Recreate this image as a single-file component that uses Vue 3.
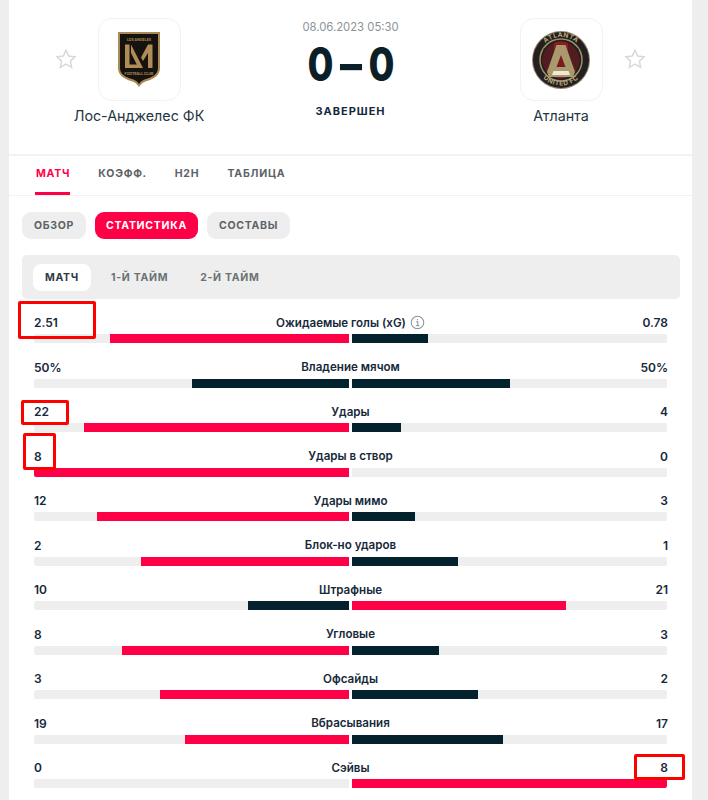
<template>
  <div class="page">
    <div class="card">
      <div class="match-head">
        <svg class="star star-left" viewBox="0 0 24 24"><path d="M12 3.200l2.700 5.800 6.300.8-4.600 4.300 1.200 6.200L12 17.200l-5.600 3.100 1.200-6.200L3 9.800l6.300-.8z" /></svg>
        <div class="team team-left">
          <div class="logo">
            <svg width="44" height="57" viewBox="0 0 44 57">
              <path d="M1 1h42v36c0 7-6 11-13 13-4 1-6 3-8 6-2-3-4-5-8-6C7 48 1 44 1 37z" fill="#a98a55" />
              <path d="M3 3h38v34c0 6-5 9-12 11-3 1-5 2-7 5-2-3-4-4-7-5-7-2-12-5-12-11z" fill="#16120f" />
              <text x="22" y="10" class="lafc-text">LOS ANGELES</text>
              <path d="M8 13.500h4.500v20h9v3.500H8z" fill="#b08d57" />
              <path d="M14 13.500l12 23.500h-4.500l-3-6-4.500-9z" fill="#b08d57" />
              <path d="M31 13.500h4.500V37H31V22l-5 8-2-3.500z" fill="#b08d57" />
              <text x="22" y="44" class="lafc-text">FOOTBALL CLUB</text>
            </svg>
          </div>
          <div class="team-name">Лос-Анджелес ФК</div>
        </div>
        <div class="center">
          <div class="date">08.06.2023 05:30</div>
          <div class="score"><span>0</span><span class="dash">-</span><span>0</span></div>
          <div class="status">ЗАВЕРШЕН</div>
        </div>
        <div class="team team-right">
          <div class="logo">
            <svg width="58" height="58" viewBox="0 0 58 58">
              <circle cx="29" cy="29" r="29" fill="#8f8567" />
              <circle cx="29" cy="29" r="28" fill="#231f20" />
              <circle cx="29" cy="29" r="21" fill="none" stroke="#a19060" stroke-width="1.500" />
              <circle cx="29" cy="29" r="18.500" fill="#8c1c22" />
              <path d="M11 18l11-8v28l-11 1zM47 18l-11-8v28l11 1z" fill="#231f20" opacity="0.55" />
              <path d="M24.500 14h9L43 41l-2 5H17l-2-5z" fill="#a99a6d" />
              <path d="M29 24l4.500 12h-9z" fill="#7d1a20" />
              <path d="M21.500 40h15l1.500 4H20z" fill="#efe9d8" />
              <path id="atl-top" d="M6 29a23 23 0 0 1 46 0" fill="none" />
              <path id="atl-bottom" d="M3.500 29a25.500 25.500 0 0 0 51 0" fill="none" />
              <text class="atl-text"><textPath href="#atl-top" startOffset="50%" text-anchor="middle">ATLANTA</textPath></text>
              <text class="atl-text"><textPath href="#atl-bottom" startOffset="50%" text-anchor="middle">UNITED FC</textPath></text>
            </svg>
          </div>
          <div class="team-name">Атланта</div>
        </div>
        <svg class="star star-right" viewBox="0 0 24 24"><path d="M12 3.200l2.700 5.800 6.300.8-4.600 4.300 1.200 6.200L12 17.200l-5.600 3.100 1.200-6.200L3 9.800l6.300-.8z" /></svg>
      </div>

      <div class="main-tabs">
        <div v-for="t in mainTabs" :key="t" class="main-tab" :class="{ active: t === 'МАТЧ' }">{{ t }}</div>
      </div>

      <div class="content">
        <div class="pills">
          <div class="pill">ОБЗОР</div>
          <div class="pill active">СТАТИСТИКА</div>
          <div class="pill">СОСТАВЫ</div>
        </div>

        <div class="periods">
          <div class="period active">МАТЧ</div>
          <div class="period">1-Й ТАЙМ</div>
          <div class="period">2-Й ТАЙМ</div>
        </div>

        <div class="stats">
          <div v-for="s in stats" :key="s.name" class="stat">
            <div class="stat-text">
              <span class="val">{{ s.home }}</span>
              <span class="name">
                {{ s.name }}
                <svg v-if="s.info" class="info" viewBox="0 0 16 16">
                  <circle cx="8" cy="8" r="6.700" />
                  <path d="M6.500 7.300H8.300V11.500M6.300 11.500H10M8 4.300v1.400" />
                </svg>
              </span>
              <span class="val">{{ s.away }}</span>
            </div>
            <div class="bars">
              <div class="track left">
                <div class="fill" :class="s.homeColor" :style="{ width: s.homePct + '%' }"></div>
              </div>
              <div class="track">
                <div class="fill" :class="s.awayColor" :style="{ width: s.awayPct + '%' }"></div>
              </div>
            </div>
          </div>
        </div>
      </div>

      <div class="mark mark-1"></div>
      <div class="mark mark-2"></div>
      <div class="mark mark-3"></div>
      <div class="mark mark-4"></div>
    </div>
  </div>
</template>

<script setup>
const mainTabs = ['МАТЧ', 'КОЭФФ.', 'H2H', 'ТАБЛИЦА']

// pct = share of the half-bar that is filled, colour goes to the leader
function row(name, home, away, homePct, awayPct, homeColor, awayColor, info) {
  return { name, home, away, homePct, awayPct, homeColor, awayColor, info }
}

const stats = [
  row('Ожидаемые голы (xG)', '2.51', '0.78', 76, 24, 'red', 'dark', true),
  row('Владение мячом', '50%', '50%', 50, 50, 'dark', 'dark'),
  row('Удары', '22', '4', 84, 15.500, 'red', 'dark'),
  row('Удары в створ', '8', '0', 100, 0, 'red', 'dark'),
  row('Удары мимо', '12', '3', 80, 20, 'red', 'dark'),
  row('Блок-но ударов', '2', '1', 66, 33.500, 'red', 'dark'),
  row('Штрафные', '10', '21', 32, 68, 'dark', 'red'),
  row('Угловые', '8', '3', 72, 27.500, 'red', 'dark'),
  row('Офсайды', '3', '2', 60, 40, 'red', 'dark'),
  row('Вбрасывания', '19', '17', 52, 48, 'red', 'dark'),
  row('Сэйвы', '0', '8', 0, 100, 'dark', 'red')
]
</script>

<style scoped>
.page {
  width: 708px;
  height: 800px;
  overflow: hidden;
  background: #eeeeee;
  font-family: Inter, "Noto Sans", sans-serif;
}
.card {
  position: relative;
  width: 683px;
  height: 800px;
  margin-left: 9px;
  background: #fff;
}
.match-head {
  position: relative;
  display: flex;
  justify-content: center;
  height: 156px;
  border-bottom: 2px solid #f2f2f2;
  box-sizing: border-box;
}
.star {
  position: absolute;
  top: 47px;
  width: 24px;
  height: 24px;
}
.star path {
  fill: none;
  stroke: #d5d9da;
  stroke-width: 1.500;
}
.star-left { left: 45px; }
.star-right { right: 45px; }
.team {
  position: absolute;
  top: 18px;
  display: flex;
  flex-direction: column;
  align-items: center;
  width: 200px;
}
.team-left { left: 30px; }
.team-right { left: 452px; }
.logo {
  display: flex;
  align-items: center;
  justify-content: center;
  width: 83px;
  height: 83px;
  border: 1px solid #f2f2f2;
  border-radius: 14px;
  box-sizing: border-box;
}
.lafc-text {
  font-size: 3.500px;
  font-weight: 700;
  fill: #b08d57;
  text-anchor: middle;
}
.atl-text {
  font-size: 6.500px;
  font-weight: 700;
  fill: #b8a97f;
  letter-spacing: 0.500px;
}
.team-name {
  margin-top: 6px;
  font-size: 14.300px;
  line-height: 18px;
  color: #243642;
}
.center {
  display: flex;
  flex-direction: column;
  align-items: center;
}
.date {
  margin-top: 19px;
  font-size: 11.300px;
  line-height: 16px;
  color: #8c9296;
}
.score {
  display: flex;
  justify-content: center;
  align-items: center;
  gap: 9px;
  margin-top: 4px;
  width: 86px;
  height: 50px;
  font-size: 47px;
  line-height: 50px;
  font-weight: 800;
  color: #0b1f29;
}
.score span {
  display: flex;
  justify-content: center;
  width: 25px;
  transform: scaleX(0.8);
}
.score .dash {
  width: 18px;
  flex: none;
  transform: scaleX(1.400);
}
.status {
  margin-top: 14px;
  font-size: 11px;
  line-height: 16px;
  font-weight: 700;
  letter-spacing: 1px;
  color: #16293a;
}
.main-tabs {
  display: flex;
  gap: 28px;
  height: 40px;
  padding-left: 27px;
  border-bottom: 1px solid #f2f2f2;
  box-sizing: border-box;
}
.main-tab {
  position: relative;
  font-size: 10.500px;
  line-height: 36px;
  font-weight: 700;
  letter-spacing: 0.800px;
  color: #5c6368;
}
.main-tab.active { color: #ff0046; }
.main-tab.active::after {
  content: "";
  position: absolute;
  left: -1px;
  right: 0;
  bottom: 0;
  height: 3px;
  background: #ff0046;
}
.content {
  padding: 16px 12px 0 13px;
}
.pills {
  display: flex;
  gap: 9px;
}
.pill {
  padding: 0 12px;
  height: 27px;
  border-radius: 9px;
  background: #eeeeee;
  font-size: 10.500px;
  line-height: 27px;
  font-weight: 700;
  letter-spacing: 0.700px;
  color: #5c6368;
}
.pill.active {
  padding: 0 11px;
  background: #ff0046;
  color: #fff;
}
.periods {
  display: flex;
  gap: 8px;
  align-items: center;
  height: 44px;
  margin-top: 16px;
  padding-left: 11px;
  border-radius: 5px;
  background: #eeeeee;
}
.period {
  padding: 0 12px;
  height: 27px;
  border-radius: 8px;
  font-size: 10.500px;
  line-height: 27px;
  font-weight: 700;
  letter-spacing: 0.700px;
  color: #6b7175;
}
.period.active {
  background: #fff;
  color: #2d3a42;
}
.stats {
  margin-top: 14px;
  padding: 0 13px 0 12px;
}
.stat {
  height: 44.500px;
}
.stat-text {
  display: flex;
  justify-content: space-between;
  align-items: center;
  height: 19px;
  margin-right: -1px;
  font-size: 12px;
  font-weight: 600;
  color: #16293a;
}
.val {
  font-weight: 600;
}
.name {
  position: absolute;
  left: 0;
  right: 0;
  display: flex;
  justify-content: center;
  align-items: center;
  gap: 4px;
  font-size: 11.600px;
  text-align: center;
}
.info {
  width: 15px;
  height: 15px;
}
.info circle, .info path {
  fill: none;
  stroke: #8b9094;
  stroke-width: 1.100;
}
.bars {
  display: flex;
  gap: 3px;
  margin-top: 2px;
}
.track {
  flex: 1;
  display: flex;
  height: 9px;
  background: #eeeeee;
  border-radius: 0 2px 2px 0;
  overflow: hidden;
}
.track.left {
  justify-content: flex-end;
  border-radius: 2px 0 0 2px;
}
.fill.red { background: #ff0046; }
.fill.dark { background: #04222e; }
.mark {
  position: absolute;
  border: 3px solid #ff0000;
  border-radius: 2px;
  box-sizing: border-box;
}
.mark-1 { left: 9px; top: 301px; width: 78px; height: 38px; }
.mark-2 { left: 12px; top: 400px; width: 48px; height: 25px; }
.mark-3 { left: 14px; top: 433px; width: 33px; height: 37px; }
.mark-4 { left: 625px; top: 754px; width: 51px; height: 26px; }
</style>
